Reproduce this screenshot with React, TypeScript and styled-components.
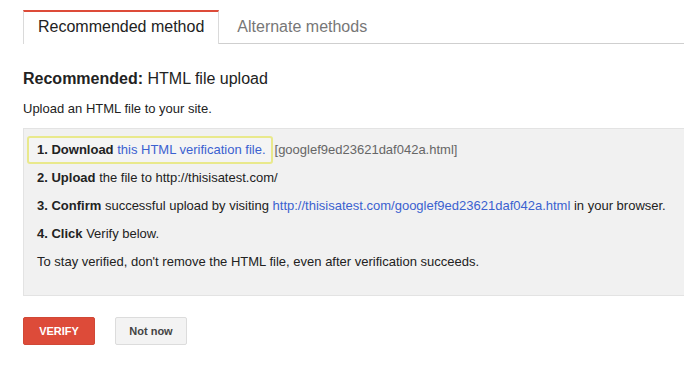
import React from 'react';
import styled, { createGlobalStyle } from 'styled-components';

const GlobalStyle = createGlobalStyle`
  html, body {
    margin: 0;
    padding: 0;
    background: #fff;
  }
  body {
    font-family: "Liberation Sans", Arial, sans-serif;
    color: #222;
  }
`;

const Page = styled.div`
  padding: 10px 0 0 23px;
  width: 684px;
  box-sizing: border-box;
`;

const TabBar = styled.div`
  display: flex;
  align-items: flex-end;
  height: 33px;
  border-bottom: 1px solid #cfcfcf;
`;

const Tab = styled.div<{ active?: boolean }>`
  box-sizing: border-box;
  height: ${p => (p.active ? '34px' : '33px')};
  margin-bottom: ${p => (p.active ? '-1px' : '0')};
  padding: 0 ${p => (p.active ? '14px' : '17px')};
  background: #fff;
  border-top: 2px solid ${p => (p.active ? '#dd4b39' : 'transparent')};
  border-left: 1px solid ${p => (p.active ? '#dadada' : 'transparent')};
  border-right: 1px solid ${p => (p.active ? '#dadada' : 'transparent')};
  font-size: 16px;
  line-height: 29px;
  color: ${p => (p.active ? '#222' : '#777')};
  white-space: nowrap;
`;

const Heading = styled.h2`
  margin: 26px 0 0;
  font-size: 16px;
  font-weight: normal;
  line-height: 18px;
  color: #222;

  b {
    font-weight: bold;
  }
`;

const Intro = styled.p`
  margin: 13px 0 0;
  font-size: 13px;
  line-height: 15px;
`;

const StepsBox = styled.div`
  margin-top: 12px;
  box-sizing: border-box;
  height: 168px;
  padding: 7px 13px 0;
  background: #f1f1f1;
  border: 1px solid #e3e3e3;
  border-right: none;
  font-size: 13px;
  color: #222;
`;

const Step = styled.div`
  line-height: 28px;
  white-space: nowrap;

  b {
    font-weight: bold;
  }
`;

const Highlight = styled.span`
  display: inline-block;
  margin-left: -10px;
  margin-right: 2px;
  padding: 0 5px 0 8px;
  line-height: 24px;
  border: 2px solid #e9e98c;
  border-radius: 3px;
  background: #f4f4f4;
`;

const Link = styled.a`
  color: #3b61d0;
  text-decoration: none;
`;

const FileName = styled.span`
  color: #666;
`;

const Actions = styled.div`
  display: flex;
  gap: 20px;
  margin-top: 21px;
`;

const Button = styled.button<{ primary?: boolean }>`
  box-sizing: border-box;
  width: 72px;
  height: 28px;
  padding: 0;
  border-radius: 2px;
  border: 1px solid ${p => (p.primary ? '#d14836' : '#dcdcdc')};
  background: ${p => (p.primary ? '#dd4b39' : '#f3f3f3')};
  color: ${p => (p.primary ? '#fff' : '#444')};
  font-family: "Liberation Sans", Arial, sans-serif;
  font-size: 11px;
  font-weight: bold;
  cursor: pointer;
`;

const App: React.FC = () => (
  <Page>
    <GlobalStyle />
    <TabBar>
      <Tab active>Recommended method</Tab>
      <Tab>Alternate methods</Tab>
    </TabBar>

    <Heading>
      <b>Recommended:</b> HTML file upload
    </Heading>
    <Intro>Upload an HTML file to your site.</Intro>

    <StepsBox>
      <Step>
        <Highlight>
          <b>1. Download</b> <Link href="#">this HTML verification file.</Link>
        </Highlight>
        <FileName>[googlef9ed23621daf042a.html]</FileName>
      </Step>
      <Step>
        <b>2. Upload</b> the file to http://thisisatest.com/
      </Step>
      <Step>
        <b>3. Confirm</b> successful upload by visiting{' '}
        <Link href="#">http://thisisatest.com/googlef9ed23621daf042a.html</Link> in your browser.
      </Step>
      <Step>
        <b>4. Click</b> Verify below.
      </Step>
      <Step>To stay verified, don't remove the HTML file, even after verification succeeds.</Step>
    </StepsBox>

    <Actions>
      <Button primary>VERIFY</Button>
      <Button>Not now</Button>
    </Actions>
  </Page>
);

export default App;
